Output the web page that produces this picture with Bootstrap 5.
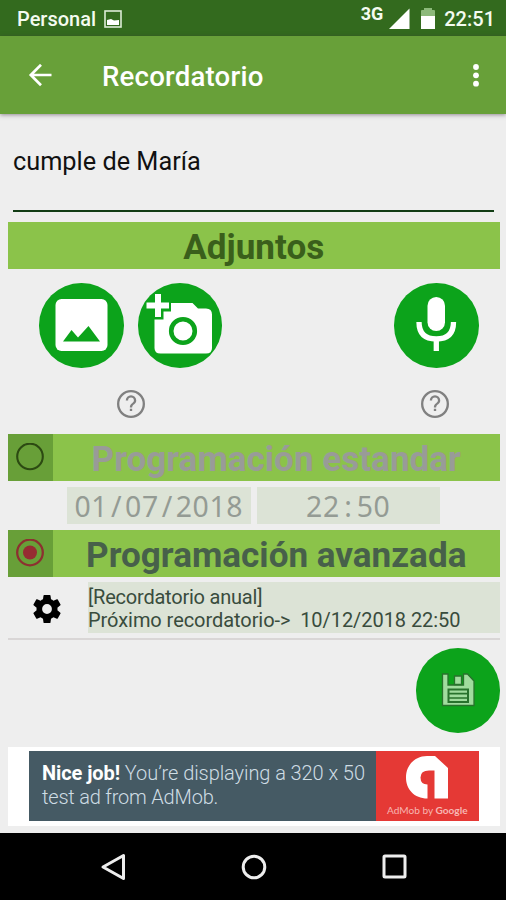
<!DOCTYPE html>
<html lang="es">
<head>
<meta charset="utf-8">
<meta name="viewport" content="width=device-width, initial-scale=1">
<title>Recordatorio</title>
<link href="https://cdn.jsdelivr.net/npm/bootstrap@5.3.0/dist/css/bootstrap.min.css" rel="stylesheet">
<style>
body{font-family:Roboto,"Noto Sans",sans-serif;background:#eee;color:#111;width:506px;height:900px;overflow:hidden}
svg{display:block;flex:none}
.status-bar{height:36px;background:#336a1e;color:#f4fbf0;font-size:20px;font-weight:500;line-height:36px;padding:1px 11px 0 17px}
.net-type{font-size:18px;font-weight:700;line-height:26px;align-self:flex-start;margin-right:6px}
.battery{margin:0 9px 0 11px}
.app-bar{height:78px;background:#68a039;padding:1px 24px 0 28px;box-shadow:0 1px 4px rgba(60,40,60,.5);color:#fff}
.app-title{margin-left:50px;padding-top:2px;font-size:27.6px;font-weight:500;line-height:32px;letter-spacing:.2px}
.screen-body{padding:0 6px 0 7.5px;height:719px}
.note-input{height:97.5px;margin:0 6px 0 5.5px;border-bottom:2px solid #123c14;font-size:25.3px;padding-top:1px;line-height:30px}
.section-bar{height:47px;background:#8bc34a;font-size:35.1px;font-weight:700;line-height:51px;color:#3a5f1b}
.attach-bar{margin-top:10.5px}
.std-bar{margin-top:15.5px;color:#999b98}
.adv-bar{margin-top:5.5px;color:#47604a}
.pick{width:45px;background:#689f38;padding-left:8.5px}
.attach{padding:14px 0 0 31.5px;gap:14px}
.attach .round-btn:last-child{margin-left:158px}
.round-btn{width:84.5px;height:84.5px;border-radius:50%;background:#0ca31b;padding:0;border:0}
.help-row{height:28px;margin-top:22.5px;padding-left:109px;padding-right:51px}
.times{padding:6px 0 0 59.5px;gap:6px}
.time-box{width:183.5px;height:37.5px;background:#dce3d6;color:#949b94;font-family:"Noto Sans",sans-serif;font-size:28.4px;line-height:39px;letter-spacing:.6px}
.time-box i{display:inline-block;width:17px;text-align:center;font-style:normal}
.next-row{margin-top:5px;padding-left:25.5px}
.gear{margin-top:3px}
.next-box{width:412px;height:51px;background:#dce3d6;color:#394c3d;font-size:20px;line-height:23.5px;padding-top:4px;white-space:pre}
.next-a{letter-spacing:-.22px}
.next-b{letter-spacing:-.06px}
.rule-line{height:2px;background:#d9d6d6;margin-top:5px}
.save{margin-top:8.8px}
.ad-frame{height:78.5px;margin-top:14.5px;padding:0 0 1px 21px}
.ad-copy{width:347.5px;height:69.5px;background:#455a64;color:#cfdde4;font-size:20px;line-height:24px;padding:9.5px 0 0 13.5px;font-weight:300;white-space:nowrap}
.ad-copy b{color:#fff;font-weight:700}
.ad-a{letter-spacing:-.08px}
.ad-b{letter-spacing:-.2px}
.ad-logo{width:102.5px;height:69.5px;background:#e53935;color:#f7b6b2;font-family:Lato,sans-serif;font-size:10.1px;line-height:14px;padding-top:4px}
.nav-keys{height:67px;background:#000;padding:0 99px 0 100px}
</style>
</head>
<body>
<header>
  <div class="status-bar d-flex align-items-center">
    <span>Personal</span>
    <svg class="ms-2" width="18" height="18" viewBox="0 0 18 18"><rect x="1" y="1" width="16" height="16" fill="none" stroke="#dcebd6" stroke-width="1.6"/><path d="M3 10l4-1 3 1.500 5-.5v5H3z" fill="#fff"/></svg>
    <span class="net-type ms-auto">3G</span>
    <svg width="21" height="22" viewBox="0 0 22 22"><path d="M0 21.500L21.500 0v21.500z" fill="#fff"/></svg>
    <svg class="battery" width="14" height="22" viewBox="0 0 14 22"><path d="M0 8V3q0-1 1-1h2V0h8v2h2q1 0 1 1v5z" fill="#8cb97a"/><path d="M0 8h14v13H0z" fill="#fff"/></svg>
    <span>22:51</span>
  </div>
  <div class="app-bar d-flex align-items-center position-relative">
    <svg width="24" height="24" viewBox="0 0 24 24" fill="none" stroke="#fff" stroke-width="2.700"><path d="M23.500 11H3M13 .800L2.800 11 13 21.200"/></svg>
    <span class="app-title">Recordatorio</span>
    <svg class="ms-auto" width="12" height="24" viewBox="0 0 12 24" fill="#fff"><circle cx="6" cy="3" r="2.900"/><circle cx="6" cy="11.300" r="2.900"/><circle cx="6" cy="19.700" r="2.900"/></svg>
  </div>
</header>

<main class="screen-body">
  <div class="note-input d-flex align-items-center"><span>cumple de María</span></div>
  <div class="section-bar attach-bar text-center">Adjuntos</div>
  <div class="attach d-flex">
    <button class="round-btn" aria-label="Imagen"><svg width="84.500" height="84.500" viewBox="39 283 84.500 84.500"><rect x="55.500" y="299" width="52" height="52" rx="6" fill="#fff"/><path d="M63 341.500L71.500 330l6.500 7.500L88.500 326 100 341.500z" fill="#0ca31b"/></svg></button>
    <button class="round-btn" aria-label="Foto"><svg width="84.500" height="84.500" viewBox="137.500 283 84.500 84.500"><path d="M170.500 303H192l5.500 5.500h8q6 0 6 6V348q0 5.500-6 5.500H160q-6 0-6-5.500V319.500h9v-8h7.500z" fill="#fff"/><circle cx="182.500" cy="331" r="11.800" fill="#fff" stroke="#0ca31b" stroke-width="4.600"/><path d="M154.500 294h6v8.500h8v6h-8v8.500h-6v-8.500h-8.500v-6h8.500z" fill="#fff"/></svg></button>
    <button class="round-btn" aria-label="Audio"><svg width="84.500" height="84.500" viewBox="394 283 84.500 84.500"><rect x="427.500" y="297" width="17.500" height="34" rx="8.700" fill="#fff"/><path d="M419 322q0 17 17.300 17 17.200 0 17.200-17M436.300 339v12" fill="none" stroke="#fff" stroke-width="5.300"/></svg></button>
  </div>
  <div class="help-row d-flex justify-content-between">
    <svg width="28" height="28" viewBox="0 0 24 24" fill="#808080"><path d="M11 18h2v-2h-2zm1-18a12 12 0 1 0 0 24 12 12 0 0 0 0-24zm0 22a10 10 0 1 1 0-20 10 10 0 0 1 0 20zm0-17.500a4.500 4.500 0 0 0-4.500 4.500h2a2.500 2.500 0 0 1 5 0c0 2.300-3.500 2.300-3.500 6h2c0-2.600 3.500-3 3.500-6a4.500 4.500 0 0 0-4.500-4.500z"/></svg>
    <svg width="28" height="28" viewBox="0 0 24 24" fill="#808080"><path d="M11 18h2v-2h-2zm1-18a12 12 0 1 0 0 24 12 12 0 0 0 0-24zm0 22a10 10 0 1 1 0-20 10 10 0 0 1 0 20zm0-17.500a4.500 4.500 0 0 0-4.500 4.500h2a2.500 2.500 0 0 1 5 0c0 2.300-3.500 2.300-3.500 6h2c0-2.600 3.500-3 3.500-6a4.500 4.500 0 0 0-4.500-4.500z"/></svg>
  </div>
  <div class="section-bar d-flex std-bar">
    <div class="pick d-flex align-items-center"><svg width="28" height="28" viewBox="0 0 28 28"><circle cx="14" cy="13.500" r="12.800" fill="none" stroke="#2c4a12" stroke-width="2.100"/></svg></div>
    <div class="flex-fill text-center">Programación estandar</div>
  </div>
  <div class="times d-flex">
    <div class="time-box text-center">01<i>/</i>07<i>/</i>2018</div>
    <div class="time-box text-center">22<i>:</i>50</div>
  </div>
  <div class="section-bar d-flex adv-bar">
    <div class="pick d-flex align-items-center"><svg width="28" height="28" viewBox="0 0 28 28"><circle cx="14" cy="13.500" r="12.800" fill="none" stroke="#8c3030" stroke-width="2.300"/><circle cx="14" cy="13.500" r="7" fill="#962c32"/></svg></div>
    <div class="flex-fill text-center">Programación avanzada</div>
  </div>
  <div class="next-row d-flex align-items-center justify-content-between">
    <svg class="gear" width="28" height="28" viewBox="2 2 20 20"><path d="M19.430 12.980c.040-.320.070-.640.070-.980s-.030-.660-.070-.980l2.110-1.650c.190-.150.240-.420.120-.640l-2-3.460c-.120-.220-.390-.300-.610-.220l-2.490 1c-.520-.400-1.080-.730-1.690-.980l-.380-2.650C14.460 2.180 14.250 2 14 2h-4c-.250 0-.460.180-.490.420l-.380 2.650c-.610.250-1.170.590-1.690.980l-2.490-1c-.230-.090-.490 0-.610.220l-2 3.460c-.130.220-.070.490.120.640l2.110 1.650c-.040.320-.070.650-.070.980s.030.660.070.980l-2.110 1.650c-.190.150-.240.420-.120.640l2 3.460c.120.220.390.300.610.220l2.490-1c.520.400 1.080.730 1.690.980l.380 2.650c.030.240.240.420.490.420h4c.250 0 .460-.180.490-.420l.380-2.650c.610-.250 1.170-.590 1.690-.980l2.490 1c.230.090.490 0 .610-.220l2-3.460c.120-.220.070-.490-.120-.640zM12 15.500a3.500 3.500 0 1 1 0-7 3.500 3.500 0 0 1 0 7z"/></svg>
    <div class="next-box"><div class="next-a">[Recordatorio anual]</div><div class="next-b">Próximo recordatorio-&gt;  10/12/2018 22:50</div></div>
  </div>
  <div class="rule-line"></div>
  <div class="save d-flex justify-content-end">
    <button class="round-btn" aria-label="Guardar"><svg width="84.500" height="84.500" viewBox="415.500 649 84.500 84.500" stroke="#28722d"><path d="M442 675h5.500v11H463v-11h4l6.500 7v24.500H442z" fill="#a0dc9e" stroke-width="1.300"/><path d="M454 677h7v8.500h-7z" fill="#a0dc9e" stroke-width="1.300"/><path d="M448 690.500h19.500v12.500H448z" fill="#a0dc9e" stroke-width="2"/><path d="M448 694.700h19.500M448 699h19.500" stroke-width="1.700"/></svg></button>
  </div>
  <div class="ad-frame d-flex align-items-center bg-white">
    <div class="ad-copy"><div class="ad-a"><b>Nice job!</b> You’re displaying a 320 x 50</div><div class="ad-b">test ad from AdMob.</div></div>
    <div class="ad-logo d-flex flex-column align-items-center">
      <svg width="44" height="44" viewBox="0 0 44 44"><path d="M22.500 43.500C9 43.500 1 34 1 22.500 1 10 10 1 22 1h8l13 12v30.500H29.500V15.500H24q-8.500 0-8.500 7t7 7z" fill="#fff"/></svg>
      <span class="text-nowrap mt-1">AdMob by <span class="fw-bold">Google</span></span>
    </div>
  </div>
</main>

<nav class="nav-keys d-flex align-items-center justify-content-between">
  <svg width="26" height="28" viewBox="0 0 26 28" fill="none" stroke="#eee" stroke-width="3" stroke-linejoin="round"><path d="M23.500 2.500v23L3 14z"/></svg>
  <svg width="26" height="26" viewBox="0 0 26 26" fill="none" stroke="#eee" stroke-width="3"><circle cx="13" cy="13" r="10.800"/></svg>
  <svg width="25" height="25" viewBox="0 0 25 25" fill="none" stroke="#eee" stroke-width="3"><rect x="2" y="2" width="21" height="21" rx="1"/></svg>
</nav>
<script src="https://cdn.jsdelivr.net/npm/bootstrap@5.3.0/dist/js/bootstrap.bundle.min.js"></script>
</body>
</html>
